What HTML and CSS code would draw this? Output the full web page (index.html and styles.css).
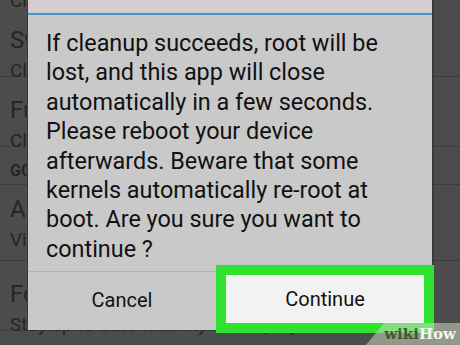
FILE: index.html
```html
<!doctype html>
<html lang="en">
 <head>
  <meta charset="UTF-8">
  <title>Full unroot</title>
  <link rel="stylesheet" href="styles.css">
 </head>
 <body>

	<!-- settings list behind the dialog -->
	<div class="list">
		<div class="item first">
			<div class="sub">Clean up</div>
		</div>
		<div class="item">
			<div class="ttl">Switch superuser app</div>
			<div class="sub">Clean up for switching</div>
		</div>
		<div class="item">
			<div class="ttl">Full unroot</div>
			<div class="sub">Cleanup for unroot</div>
		</div>
		<div class="head">GOOGLE+</div>
		<div class="item">
			<div class="ttl">About</div>
			<div class="sub">View credits</div>
		</div>
		<div class="item">
			<div class="ttl">Follow</div>
			<div class="sub">Stay up to date with my latest projects</div>
		</div>
	</div>

	<!-- dialog -->
	<div class="dialog">
		<div class="dlg-top"></div>
		<div class="msg">
			If cleanup succeeds, root will be<br>
			lost, and this app will close<br>
			automatically in a few seconds.<br>
			Please reboot your device<br>
			afterwards. Beware that some<br>
			kernels automatically re-root at<br>
			boot. Are you sure you want to<br>
			continue ?
		</div>
		<div class="btns">
			<div class="btn cancel">Cancel</div>
			<div class="btn cont">Continue</div>
		</div>
	</div>

	<div class="mark"><span class="w">wiki</span><span class="h">How</span></div>

 </body>
</html>
```

FILE: styles.css
```css
	/* page */
	body
	{
		margin:0;
		width:460px;
		height:345px;
		overflow:hidden;
		position:relative;
		background-color:#4c4c4c;
		font-family:Roboto, "Noto Sans", sans-serif;
	}

	/* background list (dimmed) */
	div.list
	{
		color:#262626;
	}

	div.item
	{
		padding:19px 10px 0 10px;
		height:70px;
		border-bottom:1px solid #3c3c3c;
		box-sizing:border-box;
	}

	div.item.first
	{
		height:19px;
		padding-top:0;
		border-bottom:none;
	}
	div.item.first div.sub
	{
		margin-top:-12px;
	}

	div.ttl
	{
		font-size:24px;
		line-height:28px;
		white-space:nowrap;
	}

	div.sub
	{
		font-size:19px;
		line-height:26px;
		margin-top:4px;
		white-space:nowrap;
	}

	div.head
	{
		font-size:16px;
		font-weight:bold;
		padding:14px 10px 0 10px;
		height:38px;
		box-sizing:border-box;
		border-bottom:1px solid #3c3c3c;
	}

	div.item + div.head + div.item
	{
		height:76px;
		padding-top:10px;
	}

	/* dialog overlay */
	div.dialog
	{
		position:absolute;
		left:28px;
		top:0;
		width:404px;
		height:330px;
		background-color:#c9c9c9;
		box-shadow:-1px 0 0 #3a3a3a, 2px 0 0 #3a3a3a;
		display:flex;
		flex-direction:column;
	}

	div.dlg-top
	{
		height:13px;
		background-color:#d4cdcf;
		border-bottom:2px solid #3b99c4;
	}

	div.msg
	{
		padding:14px 10px 0 18px;
		height:257px;
		box-sizing:border-box;
		font-size:23.4px;
		line-height:29.4px;
		color:#111;
		white-space:nowrap;
		border-bottom:1px solid #b3b3b3;
	}

	div.btns
	{
		flex:1;
		display:flex;
		position:relative;
	}

	div.btn
	{
		font-size:20px;
		color:#111;
		display:flex;
		align-items:center;
		justify-content:center;
	}

	div.cancel
	{
		width:188px;
		padding-bottom:2px;
	}

	/* highlighted button with green outline */
	div.cont
	{
		position:absolute;
		left:198px;
		top:3px;
		width:198px;
		height:48px;
		background-color:#f2f2f2;
		outline:10px solid #31e331;
	}

	/* watermark */
	div.mark
	{
		position:absolute;
		right:0;
		bottom:0;
		width:94px;
		height:22px;
		background-color:rgba(205,215,195,0.55);
		clip-path:polygon(18px 0, 100% 0, 100% 100%, 0 100%);
		font-family:"DejaVu Serif", serif;
		font-weight:bold;
		font-size:15px;
		line-height:22px;
		box-sizing:border-box;
		text-align:right;
		padding-right:4px;
	}
	div.mark span.w
	{
		color:#3f5a2f;
	}
	div.mark span.h
	{
		color:#f4f6f0;
	}
```
